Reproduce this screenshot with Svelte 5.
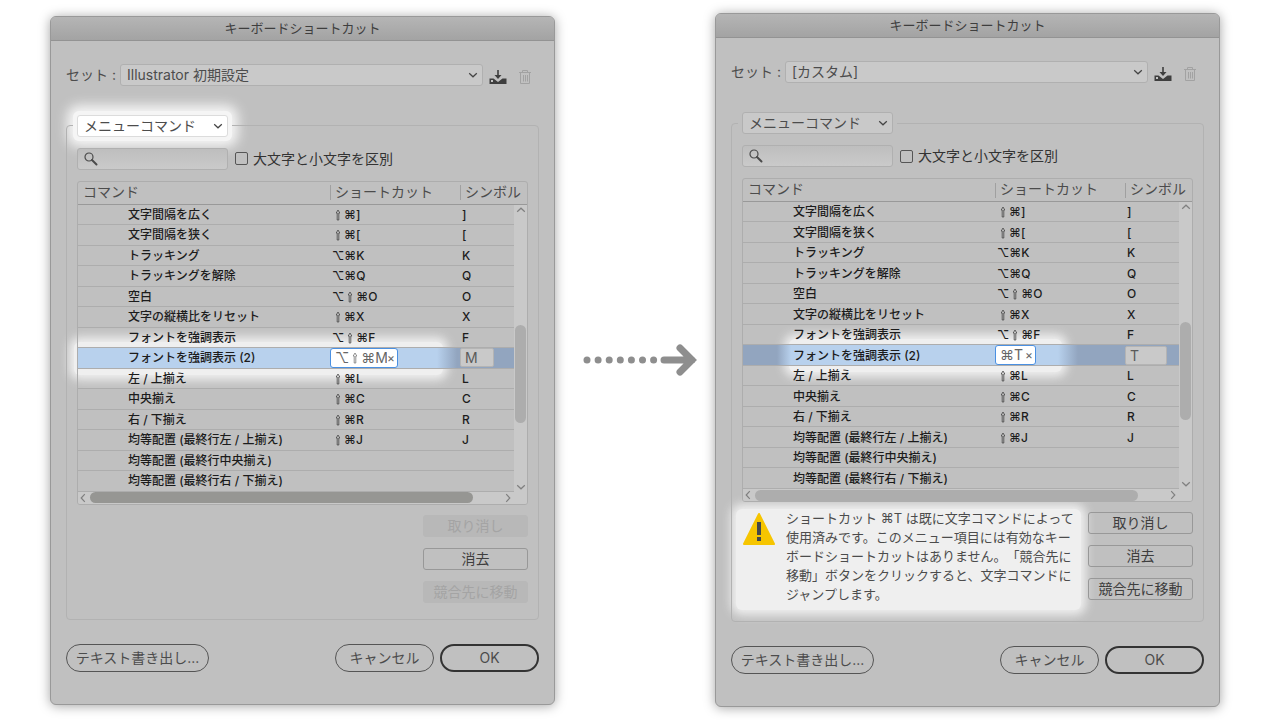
<script>
  const rows = [
    { name: '文字間隔を広く', keys: '⇧⌘]', symbol: ']' },
    { name: '文字間隔を狭く', keys: '⇧⌘[', symbol: '[' },
    { name: 'トラッキング', keys: '⌥⌘K', symbol: 'K' },
    { name: 'トラッキングを解除', keys: '⌥⌘Q', symbol: 'Q' },
    { name: '空白', keys: '⌥⇧⌘O', symbol: 'O' },
    { name: '文字の縦横比をリセット', keys: '⇧⌘X', symbol: 'X' },
    { name: 'フォントを強調表示', keys: '⌥⇧⌘F', symbol: 'F' },
    { name: 'フォントを強調表示 (2)', selected: true },
    { name: '左 / 上揃え', keys: '⇧⌘L', symbol: 'L' },
    { name: '中央揃え', keys: '⇧⌘C', symbol: 'C' },
    { name: '右 / 下揃え', keys: '⇧⌘R', symbol: 'R' },
    { name: '均等配置 (最終行左 / 上揃え)', keys: '⇧⌘J', symbol: 'J' },
    { name: '均等配置 (最終行中央揃え)', keys: '', symbol: '' },
    { name: '均等配置 (最終行右 / 下揃え)', keys: '', symbol: '' },
  ];

  const before = { id: 'before', set: 'Illustrator 初期設定', modifiers: '⌥⇧', keys: '⌘M', symbol: 'M', conflict: false };
  const after = { id: 'after', set: '[カスタム]', modifiers: '', keys: '⌘T', symbol: 'T', conflict: true };
</script>

{#snippet chevron(dir)}
  <svg class="chevron {dir}" viewBox="0 0 10 10" width="10" height="10" aria-hidden="true">
    <path d="M1.2 3.2 5 6.8 8.8 3.2" />
  </svg>
{/snippet}

{#snippet keyCaps(keys)}
  {#each [...keys] as key}
    {#if key === '⇧'}
      <svg class="shift" viewBox="0 0 12 12" role="img" aria-label="shift">
        <path d="M6 1 7.800 4H6.800V11H5.200V4H4.200z" />
      </svg>
    {:else}
      <span>{key}</span>
    {/if}
  {/each}
{/snippet}

{#snippet dialog(d)}
  <section class="dialog {d.id}">
    <h2 class="titlebar">キーボードショートカット</h2>

    <div class="body">
      <div class="set-row">
        <label for="{d.id}-set">セット :</label>
        <div class="select">
          <select id="{d.id}-set"><option>{d.set}</option></select>
          {@render chevron('down')}
        </div>
        <button class="icon-btn" aria-label="保存">
          <svg viewBox="0 0 18 16" width="18" height="16">
            <path d="M9 1v8" stroke="#3e3e3e" stroke-width="1.600" />
            <path d="M5.500 6h7L9 10z" fill="#3e3e3e" />
            <path d="M0.500 9.500h4l4.500 3.500 4.500-3.500h4v5.500h-17z" fill="#3e3e3e" />
            <rect x="2" y="11" width="2" height="2" fill="#c4c4c4" />
          </svg>
        </button>
        <button class="icon-btn trash" aria-label="削除" disabled>
          <svg viewBox="0 0 14 16" width="14" height="16" fill="none" stroke="#a2a2a2">
            <path d="M1 3.500h12M4.500 3V1.500h5V3M2.500 4v10.500h9V4M5.500 6v6.500M7.500 6v6.500M9.500 6v6.500" />
          </svg>
        </button>
      </div>

      <fieldset>
        <legend>
          <div class="select kind">
            <select aria-label="コマンドの種類"><option>メニューコマンド</option></select>
            {@render chevron('down')}
          </div>
        </legend>

        <div class="search-row">
          <div class="search">
            <svg viewBox="0 0 14 14" width="14" height="14" aria-hidden="true">
              <circle cx="5" cy="5" r="4" fill="none" stroke="#4a4a4a" stroke-width="1.200" />
              <path d="M8 8l4.500 4.500" stroke="#4a4a4a" stroke-width="2" stroke-linecap="round" />
            </svg>
            <input type="text" aria-label="検索" />
          </div>
          <label class="check"><input type="checkbox" />大文字と小文字を区別</label>
        </div>

        <div class="list">
          <table>
            <thead>
              <tr>
                <th class="c-name">コマンド</th>
                <th class="c-keys">ショートカット</th>
                <th>シンボル</th>
              </tr>
            </thead>
            <tbody>
              {#each rows as row}
                {#if row.selected}
                  <tr class="selected">
                    <td>{row.name}</td>
                    <td>
                      <div class="key-box">
                        {@render keyCaps(d.modifiers)}
                        <input type="text" aria-label="ショートカット" value={d.keys} />
                        <button aria-label="クリア">×</button>
                      </div>
                    </td>
                    <td><input class="symbol" type="text" aria-label="シンボル" value={d.symbol} /></td>
                  </tr>
                {:else}
                  <tr>
                    <td>{row.name}</td>
                    <td><div class="keys">{@render keyCaps(row.keys)}</div></td>
                    <td>{row.symbol}</td>
                  </tr>
                {/if}
              {/each}
            </tbody>
          </table>
          <div class="vbar">
            {@render chevron('up')}
            <div class="track"><div class="thumb"></div></div>
            {@render chevron('down')}
          </div>
          <div class="hbar">
            {@render chevron('left')}
            <div class="thumb"></div>
            {@render chevron('right')}
          </div>
        </div>

        <div class="lower">
          {#if d.conflict}
            <div class="notice">
              <svg viewBox="0 0 34 34" width="34" height="34" aria-hidden="true">
                <path d="M17 2 32 32H2z" fill="#f6c500" stroke="#f6c500" stroke-width="2" stroke-linejoin="round" />
                <path d="M17 10v13M17 25v4" stroke="#44484c" stroke-width="4" />
              </svg>
              <p>
                ショートカット ⌘T は既に文字コマンドによって使用済みです。このメニュー項目には有効なキーボードショートカットはありません。「競合先に移動」ボタンをクリックすると、文字コマンドにジャンプします。
              </p>
            </div>
          {/if}
          <div class="actions">
            <button disabled={!d.conflict}>取り消し</button>
            <button>消去</button>
            <button disabled={!d.conflict}>競合先に移動</button>
          </div>
        </div>
      </fieldset>

      <div class="footer">
        <button class="pill export">テキスト書き出し...</button>
        <button class="pill">キャンセル</button>
        <button class="pill primary">OK</button>
      </div>
    </div>
  </section>
{/snippet}

<main>
  {@render dialog(before)}

  <svg class="arrow" viewBox="0 0 160 40" width="160" height="40" aria-hidden="true">
    {#each [0, 1, 2, 3, 4, 5, 6] as i}
      <circle cx={32 + i * 11.1} cy="20" r="3.500" fill="#8e8e8e" />
    {/each}
    <path d="M109 20h28M125 8l12 12-12 12" fill="none" stroke="#8e8e8e" stroke-width="7" stroke-linecap="round" />
  </svg>

  {@render dialog(after)}
</main>

<style>
  :global(body) {
    background: #fff;
  }

  main {
    display: grid;
    grid-template-columns: 1fr 160px 1fr;
    align-items: center;
    box-sizing: border-box;
    min-height: 100vh;
    padding: 0 60px 0 50px;
    font-family: Inter, 'Noto Sans CJK JP', sans-serif;
    font-size: 14px;
    color: #4c4c4c;
  }

  button,
  input,
  select {
    box-sizing: border-box;
    margin: 0;
    font: inherit;
    color: inherit;
  }

  .dialog {
    isolation: isolate;
    border: 1px solid #999;
    border-radius: 6px;
    background: #c0c0c0;
    box-shadow: 0 1px 12px rgba(0, 0, 0, 0.36);
  }

  .titlebar {
    margin: 0;
    height: 23px;
    border-bottom: 1px solid #939393;
    border-radius: 5px 5px 0 0;
    background: linear-gradient(#b5b5b5, #a3a3a3);
    font-size: 13px;
    font-weight: 400;
    line-height: 23px;
    text-align: center;
    color: #3e3e3e;
  }

  .body {
    padding: 23px 15px 32px;
  }

  .set-row {
    display: flex;
    align-items: center;
  }

  .set-row label {
    flex: none;
    width: 54px;
    line-height: 22px;
  }

  .select {
    position: relative;
    flex: 1;
  }

  .select select {
    display: block;
    width: 100%;
    height: 22px;
    padding: 0 24px 0 6px;
    border: 1px solid #b0b0b0;
    border-radius: 3px;
    background: #c9c9c9;
    line-height: 20px;
    appearance: none;
  }

  .chevron {
    display: block;
    flex: none;
    fill: none;
    stroke: #444;
    stroke-width: 1.2;
  }

  .select .chevron {
    position: absolute;
    top: 6px;
    right: 5px;
    pointer-events: none;
  }

  .up {
    transform: rotate(180deg);
  }

  .left {
    transform: rotate(90deg);
  }

  .right {
    transform: rotate(-90deg);
  }

  .icon-btn {
    display: flex;
    margin: 4px 0 0 6px;
    padding: 0;
    border: 0;
    background: none;
  }

  .icon-btn.trash {
    margin-left: 11px;
    margin-right: 7px;
  }

  fieldset {
    min-width: 0;
    margin: 29px 0 0;
    padding: 0 10px;
    border: 1px solid #b2b2b2;
    border-radius: 4px;
  }

  legend {
    padding: 0 4px;
    margin-left: -4px;
  }

  .kind {
    width: 151px;
  }

  .before .kind select {
    border-color: #dcdcdc;
    background: #fff;
  }

  .before .kind::before {
    content: '';
    position: absolute;
    z-index: -1;
    inset: -4px;
    border-radius: 6px;
    background: #f5f5f5;
    box-shadow: 0 0 12px 6px #f5f5f5;
  }

  .search-row {
    display: flex;
    align-items: center;
    gap: 7px;
    margin: 11px 0;
  }

  .search {
    display: flex;
    align-items: center;
    box-sizing: border-box;
    width: 151px;
    height: 22px;
    padding-left: 6px;
    border: 1px solid #b0b0b0;
    border-radius: 3px;
    background: linear-gradient(#bebebe, #cacaca);
  }

  .search input {
    flex: 1;
    min-width: 0;
    border: 0;
    background: none;
  }

  .check {
    display: flex;
    align-items: center;
    gap: 5px;
    line-height: 22px;
    color: #333;
  }

  .check input {
    width: 13px;
    height: 13px;
    border: 1px solid #555;
    border-radius: 2px;
    appearance: none;
  }

  .list {
    position: relative;
    border: 1px solid #adadad;
    border-radius: 3px;
  }

  table {
    width: 100%;
    border-spacing: 0;
    table-layout: fixed;
    line-height: 18px;
  }

  th {
    height: 23px;
    padding: 0 0 2px 5px;
    border-bottom: 1px solid #999;
    box-sizing: border-box;
    font-weight: 400;
    text-align: left;
    background: linear-gradient(#a0a0a0, #a0a0a0) left center / 1px 15px no-repeat;
  }

  .c-name {
    width: 252px;
    background: none;
  }

  .c-keys {
    width: 130px;
  }

  td {
    box-sizing: border-box;
    height: 20px;
    padding: 1px 0 0 2px;
    border-bottom: 1px solid #adadad;
    font-size: 12px;
    font-weight: 500;
    color: #1c1c1c;
    white-space: nowrap;
  }

  tr:nth-child(even) td {
    height: 21px;
  }

  td:first-child {
    padding-left: 50px;
  }

  .keys {
    display: flex;
    align-items: center;
  }

  .shift {
    flex: none;
    width: 12px;
    height: 12px;
    fill: none;
    stroke: #444;
    stroke-width: 0.8;
  }

  .selected {
    position: relative;
    background: linear-gradient(90deg, #b8d1ed calc(100% - 90px), #92a5bf calc(100% - 70px));
  }

  .selected td:nth-child(n + 2) {
    padding: 0;
  }

  .selected td:first-child::before {
    content: '';
    position: absolute;
    z-index: -1;
    inset: -6px 84px -6px -4px;
    border-radius: 6px;
    background: #efefef;
    box-shadow: 0 0 10px 5px #efefef;
  }

  .after .selected {
    background: linear-gradient(
      90deg,
      #92a5bf 34px,
      #b8d1ed 48px,
      #b8d1ed calc(100% - 134px),
      #92a5bf calc(100% - 114px)
    );
  }

  .after .selected td:first-child::before {
    left: 46px;
    right: 130px;
  }

  .key-box {
    display: flex;
    align-items: center;
    box-sizing: border-box;
    width: 68px;
    height: 20px;
    padding: 0 2px 0 4px;
    border: 1px solid #4a90e2;
    border-radius: 3px;
    background: #fff;
    font-size: 14px;
    font-weight: 400;
    color: #666;
  }

  .key-box .shift {
    height: 14px;
    stroke: #777;
  }

  .after .key-box {
    width: 41px;
  }

  .key-box input {
    flex: 1;
    min-width: 0;
    height: 18px;
    padding: 0;
    border: 0;
    background: none;
  }

  .key-box button {
    padding: 0;
    border: 0;
    background: none;
    font-size: 12px;
    line-height: 18px;
  }

  .symbol {
    display: block;
    width: 34px;
    height: 19px;
    padding: 0 0 0 4px;
    border: 1px solid #b4b4b4;
    border-radius: 2px;
    background: #c9c9c9;
    font-size: 14px;
    font-weight: 400;
    color: #5a5a5a;
  }

  .after .symbol {
    width: 42px;
  }

  .vbar {
    position: absolute;
    top: 23px;
    right: 0;
    bottom: 12px;
    display: flex;
    flex-direction: column;
    align-items: center;
    width: 13px;
    background: #c9c9c9;
  }

  .vbar .chevron,
  .hbar .chevron {
    stroke: #808080;
  }

  .track {
    flex: 1;
    width: 11px;
  }

  .vbar .thumb {
    height: 98px;
    margin-top: 110px;
    border-radius: 6px;
    background: #adadad;
  }

  .hbar {
    display: flex;
    align-items: center;
    height: 12px;
    border-radius: 0 0 2px 2px;
    background: #c9c9c9;
  }

  .hbar .thumb {
    flex: 1;
    height: 11px;
    margin: 0 30px 0 2px;
    border-radius: 6px;
    background: #969693;
  }

  .after .hbar .thumb {
    background: #adadad;
  }

  .hbar .right {
    margin-right: 14px;
  }

  .lower {
    display: flex;
    justify-content: flex-end;
    padding: 10px 0 16px;
  }

  .after .lower {
    padding-bottom: 20px;
  }

  .notice {
    position: relative;
    display: flex;
    flex: 1;
    gap: 10px;
    padding-right: 13px;
  }

  .notice::before {
    content: '';
    position: absolute;
    z-index: -1;
    inset: -3px 7px -9px -6px;
    border-radius: 6px;
    background: #efefef;
    box-shadow: 0 0 10px 5px #efefef;
  }

  .notice svg {
    flex: none;
  }

  .notice p {
    flex: 1;
    margin: -3px 0;
    font-size: 13px;
    line-height: 19px;
    word-break: break-all;
    text-spacing-trim: space-all;
  }

  .actions {
    display: flex;
    flex-direction: column;
    gap: 11px;
    width: 105px;
  }

  .actions button {
    height: 22px;
    padding: 0;
    border: 1px solid #989898;
    border-radius: 3px;
    background: none;
    line-height: 20px;
    color: #3e3e3e;
  }

  .actions button:disabled {
    border-color: #b8b8b8;
    background: #b8b8b8;
    color: #a4a4a4;
  }

  .footer {
    display: flex;
    gap: 6px;
    margin-top: 24px;
  }

  .pill {
    width: 99px;
    height: 28px;
    padding: 0;
    border: 1px solid #555;
    border-radius: 14px;
    background: none;
    line-height: 24px;
  }

  .pill.export {
    width: 143px;
    margin-right: auto;
  }

  .pill.primary {
    border: 2px solid #333;
  }
</style>
